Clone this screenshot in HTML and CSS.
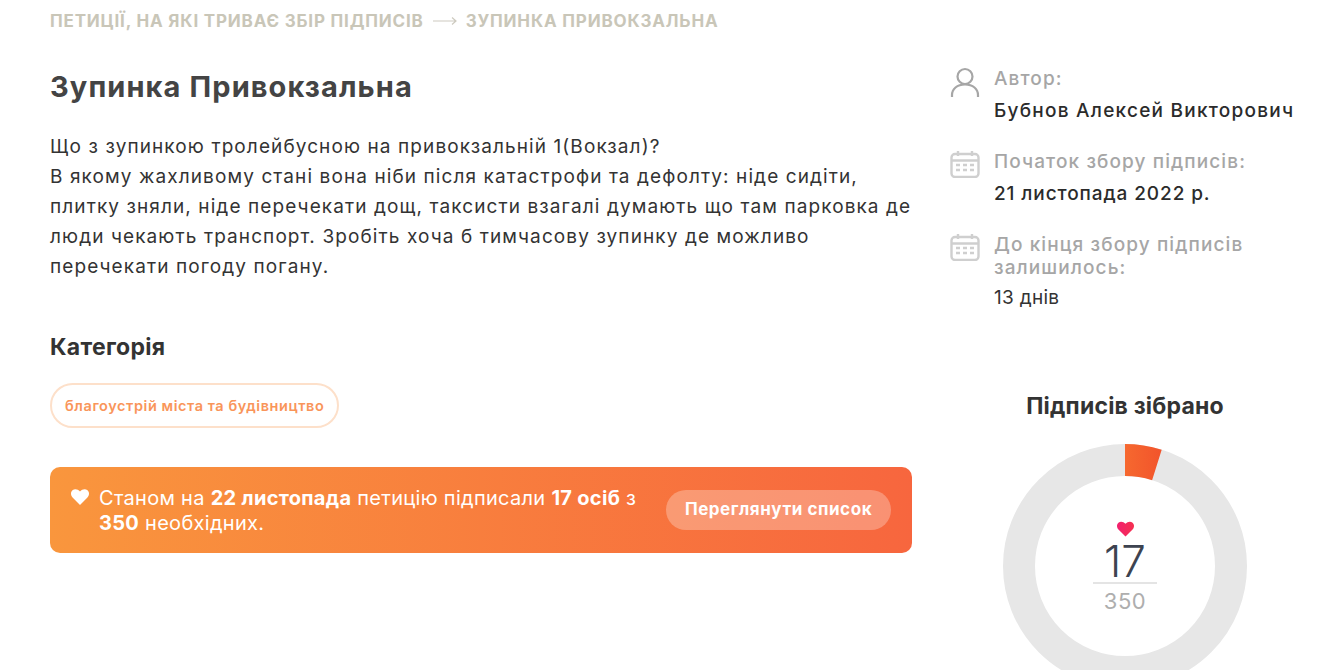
FILE: index.html

```html
<!DOCTYPE html>
<html lang="uk">
<head>
  <meta charset="UTF-8" />
  <title>Зупинка Привокзальна</title>
  <link rel="stylesheet" href="styles.css">
</head>
<body>
  <div class="breadcrumbs">
    <a href="#">Петиції, на які триває збір підписів</a>
    <svg class="crumb-arrow" width="24" height="10" viewBox="0 0 24 10"><path d="M0 5h23M19 1.500 23 5l-4 3.500" fill="none" stroke="#cdcabf" stroke-width="1.200"/></svg>
    <span>Зупинка Привокзальна</span>
  </div>

  <div class="page">
    <main class="main">
      <h1>Зупинка Привокзальна</h1>
      <p class="text">Що з зупинкою тролейбусною на привокзальній 1(Вокзал)?<br>В якому жахливому стані вона ніби після катастрофи та дефолту: ніде сидіти, плитку зняли, ніде перечекати дощ, таксисти взагалі думають що там парковка де люди чекають транспорт. Зробіть хоча б тимчасову зупинку де можливо перечекати погоду погану.</p>

      <h3>Категорія</h3>
      <a class="tag" href="#">благоустрій міста та будівництво</a>

      <div class="banner">
        <svg class="banner-heart" width="18" height="16" viewBox="0 0 18 16"><path d="M9 16 1.800 8.800C-.6 6.400-.5 3 1.500 1.300 3.500-.4 6.700-.2 9 2.500c2.300-2.700 5.500-2.900 7.500-1.200 2 1.700 2.100 5.100-.3 7.500z" fill="#fff"/></svg>
        <p>Станом на <b>22 листопада</b> петицію підписали <b>17 осіб</b> з <b>350</b> необхідних.</p>
        <a class="banner-btn" href="#">Переглянути список</a>
      </div>
    </main>

    <aside class="side">
      <div class="info info-author">
        <svg class="info-icon" width="30" height="32" viewBox="0 0 30 32"><g fill="none" stroke="#a6a6a6" stroke-width="2.200"><circle cx="15" cy="9.500" r="7.500"/><path d="M2 30v-2c0-6 5-10.500 13-10.500S28 22 28 28v2"/></g></svg>
        <div>
          <div class="info-label">Автор:</div>
          <div class="info-value">Бубнов Алексей Викторович</div>
        </div>
      </div>
      <div class="info info-start">
        <svg class="info-icon" width="30" height="28" viewBox="0 0 30 28"><use href="#cal"/></svg>
        <div>
          <div class="info-label">Початок збору підписів:</div>
          <div class="info-value">21 листопада 2022 р.</div>
        </div>
      </div>
      <div class="info info-end">
        <svg class="info-icon" width="30" height="28" viewBox="0 0 30 28"><use href="#cal"/></svg>
        <div>
          <div class="info-label">До кінця збору підписів залишилось:</div>
          <div class="info-days">13 днів</div>
        </div>
      </div>

      <h3 class="count-title">Підписів зібрано</h3>
      <div class="ring">
        <svg width="244" height="244" viewBox="0 0 244 244">
          <defs>
            <linearGradient id="wedge" x1="0" x2="1" y1="0" y2="0"><stop offset="0" stop-color="#f6682f"/><stop offset="1" stop-color="#f2542b"/></linearGradient>
            <linearGradient id="pink" x1="0" x2="1" y1="0" y2="0"><stop offset="0" stop-color="#f2206f"/><stop offset="1" stop-color="#f5304f"/></linearGradient>
          </defs>
          <circle cx="122" cy="122" r="106" fill="none" stroke="#e7e7e7" stroke-width="32"/>
          <path d="M122 0A122 122 0 0 1 158.700 5.700L149.100 36.200A90 90 0 0 0 122 32z" fill="url(#wedge)"/>
        </svg>
        <div class="ring-center">
          <svg width="17" height="16" viewBox="0 0 18 16"><path d="M9 16 1.800 8.800C-.6 6.400-.5 3 1.500 1.300 3.500-.4 6.700-.2 9 2.500c2.300-2.700 5.500-2.900 7.500-1.200 2 1.700 2.100 5.100-.3 7.500z" fill="url(#pink)"/></svg>
          <div class="ring-count">17</div>
          <div class="ring-total">350</div>
        </div>
      </div>
    </aside>
  </div>

  <svg width="0" height="0" class="defs">
    <defs>
      <g id="cal" fill="none" stroke="#cfcfcf" stroke-width="2.400">
        <rect x="1.500" y="4" width="27" height="23" rx="3.500"/>
        <path d="M1.500 10.500h27M8 1v5M22 1v5"/>
        <path d="M6 15h4M13 15h4M20 15h4M6 20h4M13 20h4M20 20h4" stroke-width="2.600"/>
      </g>
    </defs>
  </svg>
</body>
</html>
```

FILE: styles.css

```css
* {
  box-sizing: border-box;
}
body {
  margin: 0;
  height: 670px;
  overflow: hidden;
  background-color: #fff;
  font-family: "Inter", "Noto Sans", Arial, sans-serif;
  color: #3b3b3b;
}
a {
  text-decoration: none;
  color: inherit;
}
.defs {
  position: absolute;
}
.breadcrumbs {
  display: flex;
  align-items: center;
  gap: 9px;
  padding: 11px 0 0 50px;
  height: 30px;
  font-size: 17px;
  line-height: 20px;
  font-weight: 700;
  letter-spacing: 0.82px;
  text-transform: uppercase;
  color: #c9c6b8;
}
.page {
  display: flex;
  padding-left: 50px;
}
.main {
  width: 862px;
  flex: none;
}
h1 {
  margin: 39px 0 0;
  font-size: 29px;
  line-height: 36px;
  font-weight: 700;
  letter-spacing: 1.100px;
  color: #444;
}
.text {
  margin: 27px -10px 0 0;
  font-size: 19px;
  line-height: 30px;
  letter-spacing: 1.100px;
  color: #333;
}
h3 {
  margin: 0;
  font-size: 23px;
  line-height: 28px;
  font-weight: 700;
  letter-spacing: 0.3px;
  color: #333;
}
.main h3 {
  margin-top: 51px;
}
.tag {
  display: inline-block;
  margin-top: 22px;
  padding: 0 13px;
  height: 45px;
  line-height: 41px;
  border: 2px solid #fde0ca;
  border-radius: 23px;
  font-size: 14.500px;
  font-weight: 600;
  letter-spacing: 0.56px;
  color: #f9955a;
}
.banner {
  display: flex;
  align-items: center;
  margin-top: 39px;
  height: 86px;
  padding: 0 21px;
  border-radius: 10px;
  background: linear-gradient(90deg, #f9963d, #f7663e);
  color: #fff;
}
.banner-heart {
  flex: none;
  align-self: flex-start;
  margin-top: 22px;
}
.banner p {
  margin: 1px 20px 0 10px;
  flex: 1;
  font-size: 20px;
  line-height: 25px;
  letter-spacing: 0.3px;
}
.banner-btn {
  flex: none;
  width: 225px;
  height: 40px;
  line-height: 39px;
  text-align: center;
  border-radius: 20px;
  background-color: rgba(255,255,255,0.28);
  font-size: 17px;
  font-weight: 700;
  letter-spacing: 0.55px;
}
.side {
  margin-left: 38px;
  width: 350px;
  flex: none;
}
.info {
  display: flex;
  gap: 14px;
}
.info-author {
  margin-top: 37px;
}
.info-start {
  margin-top: 27px;
}
.info-end {
  margin-top: 27px;
}
.info-icon {
  flex: none;
}
.info-label {
  font-size: 19px;
  line-height: 23px;
  font-weight: 500;
  letter-spacing: 1.100px;
  color: #a6a6a6;
}
.info-value {
  margin-top: 9px;
  font-size: 19px;
  line-height: 24px;
  font-weight: 500;
  color: #2b2b2b;
}
.info-author .info-value {
  letter-spacing: 1.250px;
}
.info-start .info-value {
  letter-spacing: 0.9px;
}
.info-days {
  margin-top: 7px;
  font-size: 19px;
  line-height: 24px;
  letter-spacing: 0.3px;
  color: #333;
}
.count-title {
  margin-top: 82px;
  width: 350px;
  text-align: center;
  letter-spacing: 0.2px;
}
.ring {
  position: relative;
  width: 244px;
  height: 244px;
  margin: 24px 0 0 53px;
}
.ring-center {
  position: absolute;
  left: 72px;
  top: 77px;
  width: 100px;
  text-align: center;
}
.ring-center svg {
  display: block;
  margin: 0 auto;
}
.ring-count {
  margin: 3px 18px 0;
  font-size: 44px;
  line-height: 42px;
  font-weight: 300;
  color: #3d4350;
  border-bottom: 2px solid #e4e4e4;
}
.ring-total {
  font-size: 22px;
  line-height: 34px;
  letter-spacing: 0.5px;
  color: #aeaeae;
}
```
